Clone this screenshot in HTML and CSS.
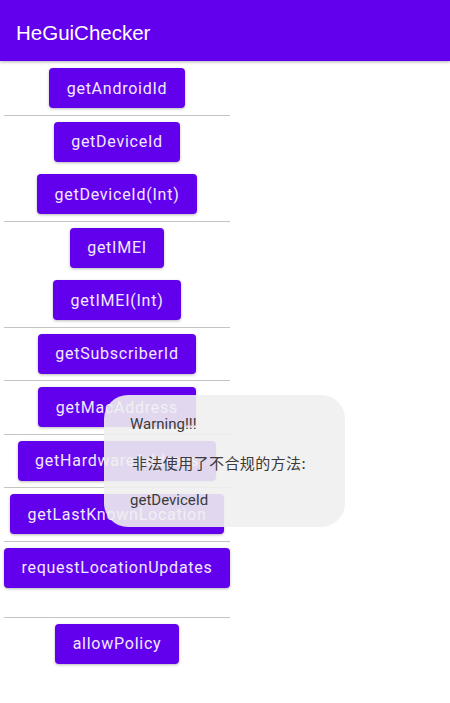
FILE: index.html
```html
<!DOCTYPE html>
<html>
<head>
<meta charset="utf-8">
<link rel="stylesheet" href="styles.css">
</head>
<body>
<header class="appbar"><span class="title">HeGuiChecker</span></header>
<main class="column">
  <button class="btn">getAndroidId</button>
  <div class="divider"></div>
  <button class="btn">getDeviceId</button>
  <button class="btn">getDeviceId(Int)</button>
  <div class="divider"></div>
  <button class="btn">getIMEI</button>
  <button class="btn">getIMEI(Int)</button>
  <div class="divider"></div>
  <button class="btn">getSubscriberId</button>
  <div class="divider"></div>
  <button class="btn">getMacAddress</button>
  <div class="divider"></div>
  <button class="btn">getHardwareAddress</button>
  <div class="divider"></div>
  <button class="btn">getLastKnownLocation</button>
  <div class="divider"></div>
  <button class="btn">requestLocationUpdates</button>
  <div class="spacer"></div>
  <div class="divider"></div>
  <button class="btn">allowPolicy</button>
</main>
<div class="toast">
  <p class="toast-line">Warning!!!</p>
  <p class="toast-line">&nbsp;</p>
  <p class="toast-line cjk">非法使用了不合规的方法:</p>
  <p class="toast-line">&nbsp;</p>
  <p class="toast-line">getDeviceId</p>
</div>
</body>
</html>
```
FILE: styles.css
```css
html, body {
  margin: 0;
  padding: 0;
  background: #ffffff;
}
body {
  width: 450px;
  height: 703px;
  overflow: hidden;
  position: relative;
  font-family: Roboto, "Noto Sans CJK SC", sans-serif;
}
.appbar {
  height: 61px;
  box-sizing: border-box;
  background: #6200ee;
  display: flex;
  align-items: center;
  padding: 5px 0 0 16px;
  box-shadow: 0 1px 3px rgba(0, 0, 0, 0.3);
  position: relative;
  z-index: 1;
}
.title {
  color: #ffffff;
  font-family: "Liberation Sans", Arial, sans-serif;
  font-size: 20.5px;
}
.column {
  width: 226px;
  margin-left: 4px;
  padding-top: 1px;
  display: flex;
  flex-direction: column;
  align-items: center;
}
.btn {
  height: 40px;
  margin: 6px 0 6.5px;
  padding: 0 17.5px;
  border: none;
  border-radius: 4px;
  background: #6200ee;
  color: #f1e9ff;
  font-family: Roboto, sans-serif;
  font-weight: 400;
  font-size: 16px;
  letter-spacing: 0.75px;
  box-shadow: 0 1px 3px rgba(0, 0, 0, 0.28);
  white-space: nowrap;
}
.divider {
  align-self: stretch;
  height: 1px;
  background: #c4c4c4;
}
.spacer {
  height: 22.5px;
}
.toast {
  position: absolute;
  left: 104px;
  top: 395px;
  width: 241px;
  height: 132px;
  box-sizing: border-box;
  padding: 20px 0 0 26px;
  background: rgba(239, 239, 239, 0.9);
  border-radius: 24px;
  color: #3a3a3a;
  font-family: Roboto, "Noto Sans CJK SC", sans-serif;
  font-size: 15px;
}
.toast-line {
  margin: 0;
  line-height: 19px;
  white-space: nowrap;
}
.cjk {
  font-family: "Noto Sans CJK SC", sans-serif;
  font-size: 15px;
  letter-spacing: 0.4px;
  margin-left: 2px;
}
```
